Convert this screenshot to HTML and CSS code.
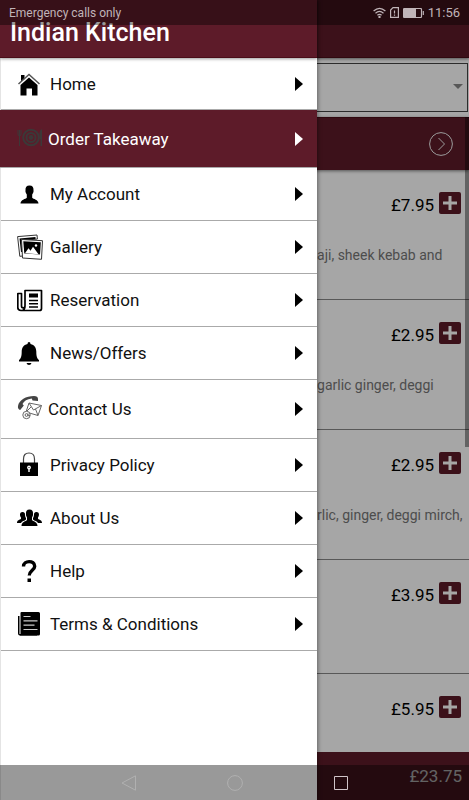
FILE: index.html
```html
<!DOCTYPE html>
<html lang="en">
<head>
<meta charset="utf-8">
<meta name="viewport" content="width=device-width, initial-scale=1">
<title>Indian Kitchen</title>
<link rel="stylesheet" href="styles.css">
</head>
<body>
<div class="app">
  <div class="page">
    <header class="page-header"></header>
    <div class="picker">
      <select class="picker-select" aria-label="Menu category"><option></option></select>
      <svg class="picker-arrow" viewBox="0 0 10 5"><path d="M0 0h10L5 5z"/></svg>
    </div>
    <main class="menu">
      <button class="category" type="button" aria-label="Open category">
        <svg class="category-icon" viewBox="0 0 24 24"><circle cx="12" cy="12" r="11.4"/><path d="M9.500 6l6 6-6 6"/></svg>
      </button>
      <section class="dish">
        <div class="dish-buy"><span class="price">£7.95</span><button class="add" type="button" aria-label="Add"><svg viewBox="0 0 22 22"><path d="M11 4v14M4 11h14"/></svg></button></div>
        <p class="dish-text">aji, sheek kebab and</p>
      </section>
      <section class="dish">
        <div class="dish-buy"><span class="price">£2.95</span><button class="add" type="button" aria-label="Add"><svg viewBox="0 0 22 22"><path d="M11 4v14M4 11h14"/></svg></button></div>
        <p class="dish-text">garlic ginger, deggi</p>
      </section>
      <section class="dish">
        <div class="dish-buy"><span class="price">£2.95</span><button class="add" type="button" aria-label="Add"><svg viewBox="0 0 22 22"><path d="M11 4v14M4 11h14"/></svg></button></div>
        <p class="dish-text">rlic, ginger, deggi mirch,</p>
      </section>
      <section class="dish dish-medium">
        <div class="dish-buy"><span class="price">£3.95</span><button class="add" type="button" aria-label="Add"><svg viewBox="0 0 22 22"><path d="M11 4v14M4 11h14"/></svg></button></div>
      </section>
      <section class="dish dish-short">
        <div class="dish-buy"><span class="price">£5.95</span><button class="add" type="button" aria-label="Add"><svg viewBox="0 0 22 22"><path d="M11 4v14M4 11h14"/></svg></button></div>
      </section>
      <div class="scroll-thumb"></div>
    </main>
    <footer class="total">£23.75</footer>
  </div>
  <div class="scrim"></div>

  <aside class="drawer">
    <h1 class="drawer-title">Indian Kitchen</h1>
    <nav class="drawer-nav">
      <a class="item item-first" href="#home">
        <svg class="icon" viewBox="0 0 26 26"><path d="M4 4h3.500v4L4 11z"/><path d="M12 6.500L20.500 14v10.500h-5.500v-7h-5.500v7H3.500V14z"/><path d="M1.500 13L12 3.500 22.500 13" fill="none" stroke="#555" stroke-width="1.500"/></svg>
        <span class="label">Home</span><svg class="arrow" viewBox="0 0 8 14"><path d="M0 0l8 7-8 7z"/></svg></a>
      <a class="item item-tall item-active" href="#order">
        <svg class="icon" viewBox="0 0 26 26"><g fill="none" stroke="currentColor"><circle cx="14" cy="11.500" r="7.800" stroke-width="2"/><circle cx="14" cy="11.500" r="4.500" stroke-width="2"/><path d="M1 4v4q0 2 1.500 2T4 8V4M2.500 4v16" stroke-width="1"/></g><circle cx="14" cy="11.500" r="2.400"/><path d="M25 3v17h-1.500v-7h-1V7q0-3 2.500-4z"/></svg>
        <span class="label">Order Takeaway</span><svg class="arrow" viewBox="0 0 8 14"><path d="M0 0l8 7-8 7z"/></svg></a>
      <a class="item" href="#account">
        <svg class="icon" viewBox="0 0 26 26"><path d="M12.500 4.500c3 0 4.200 2 4 4.500.4 2-.8 3.500-1.300 4.500v3.200c1 1.200 6.300 2 6.300 5.800h-18c0-3.800 5.300-4.600 6.300-5.800v-3.200c-.5-1-1.700-2.500-1.300-4.500-.2-2.500 1-4.500 4-4.500z"/></svg>
        <span class="label">My Account</span><svg class="arrow" viewBox="0 0 8 14"><path d="M0 0l8 7-8 7z"/></svg></a>
      <a class="item" href="#gallery">
        <svg class="icon" viewBox="0 0 26 26"><path d="M.6 2.600L20 1l.4 4L5 6.500 6 22l-3.200.3z" fill="#fff" stroke="#333"/><path d="M2.500 4.500L18.500 3v2L4.500 6.500l.8 11.500-1.300.1z"/><path d="M4.500 5.500l21 1.200-1 18.600-19-1.300z" fill="#fff" stroke="#333"/><path d="M6.300 7.300l17.500 1-.8 12.300-15.700-1z"/><path d="M8 19.300l3.500-5 2 2.500 2.500-4 5.500 7.500z" fill="#fff"/><circle cx="19" cy="11.500" r="1.200" fill="#fff"/></svg>
        <span class="label">Gallery</span><svg class="arrow" viewBox="0 0 8 14"><path d="M0 0l8 7-8 7z"/></svg></a>
      <a class="item" href="#reservation">
        <svg class="icon" viewBox="0 0 26 26"><path d="M8 3.500h16.500v18q0 2-2 2H4q-3.200 0-3.200-3V6.500H4.500V19q0 1.800 1.700 1.800T8 19zM8 19q0 4.500-3.500 4.500" fill="none" stroke="currentColor" stroke-width="1.700" stroke-linejoin="round"/><path d="M12 6.500h9v4h-9zM12 12.800h9v1.500h-9zM12 16h9v1.500h-9zM12 19.200h9v1.500h-9z"/></svg>
        <span class="label">Reservation</span><svg class="arrow" viewBox="0 0 8 14"><path d="M0 0l8 7-8 7z"/></svg></a>
      <a class="item" href="#news">
        <svg class="icon" viewBox="0 0 26 26"><path d="M10.500 4q0-2 1.500-2t1.500 2c4 .8 5.800 4 5.800 7.500 0 5 .8 7 2.700 8.500v1.500H2V20c1.900-1.500 2.700-3.500 2.700-8.500C4.700 8 6.500 4.800 10.500 4zM9.500 23h5q-.5 2-2.500 2t-2.500-2z"/></svg>
        <span class="label">News/Offers</span><svg class="arrow" viewBox="0 0 8 14"><path d="M0 0l8 7-8 7z"/></svg></a>
      <a class="item item-tall" href="#contact">
        <svg class="icon" viewBox="0 0 26 26"><path d="M1 10C2 4 9 0 17 0q4 0 4 3v2l-5.500-.5-.7-2C10 3 7 5 5.500 8l1.300 1.500-3.600 4.500Q.5 13 1 10z" fill="#444"/><g fill="#fff" stroke="#666"><path d="M12 7l12.500 2.500-3.500 10L9 16z"/><path d="M12 7l4.500 7 8-4.500M9 16l5-5M21 19.500L18.500 13" fill="none"/><circle cx="9.500" cy="19" r="3.700"/><circle cx="9.500" cy="19" r="1.400"/><path d="M11 17.500v2q1 1 2-.5" fill="none"/></g></svg>
        <span class="label">Contact Us</span><svg class="arrow" viewBox="0 0 8 14"><path d="M0 0l8 7-8 7z"/></svg></a>
      <a class="item" href="#privacy">
        <svg class="icon" viewBox="0 0 26 26"><path d="M6.500 11V7q0-6 5.500-6t5.500 6v4" fill="none" stroke="#444" stroke-width="1.200"/><path d="M3 10.500h18v13.500H3z"/><circle cx="12" cy="15.500" r="1.900" fill="#fff"/><path d="M11.300 16h1.400v4h-1.400z" fill="#fff"/><circle cx="12" cy="15.500" r=".6"/></svg>
        <span class="label">Privacy Policy</span><svg class="arrow" viewBox="0 0 8 14"><path d="M0 0l8 7-8 7z"/></svg></a>
      <a class="item" href="#about">
        <svg class="icon" viewBox="0 0 26 26"><path d="M12.500 4.500c2.800 0 3.700 1.800 3.500 4.200.3 1.800-.6 3-1 3.800v2.500c1 1.500 5.500 1.500 5.500 6h-16c0-4.500 4.500-4.500 5.500-6v-2.500c-.4-.8-1.300-2-1-3.800-.2-2.400.7-4.200 3.500-4.200z"/><path d="M5.500 7c1 0 2 .5 2.400 1.500.1 2 .4 3.500 1.100 4.500v1.500c-1.500 1.500-4 1.500-5 3.500H0c0-3 2.800-3 4-4.200v-1.300C2.500 10.500 2.500 7 5.500 7zM19.500 7c-1 0-2 .5-2.400 1.500-.1 2-.4 3.500-1.100 4.500v1.500c1.500 1.500 4 1.500 5 3.500h4c0-3-2.800-3-4-4.200v-1.300C22.500 10.500 22.500 7 19.500 7z"/></svg>
        <span class="label">About Us</span><svg class="arrow" viewBox="0 0 8 14"><path d="M0 0l8 7-8 7z"/></svg></a>
      <a class="item" href="#help">
        <svg class="icon" viewBox="0 0 26 26"><path d="M6.500 8.500C6.500 2 17.700 2 17.700 8.200c0 4-5.400 4.300-5.400 9.300" fill="none" stroke="currentColor" stroke-width="3.400"/><path d="M10.500 20.500H14V24h-3.500z"/></svg>
        <span class="label">Help</span><svg class="arrow" viewBox="0 0 8 14"><path d="M0 0l8 7-8 7z"/></svg></a>
      <a class="item" href="#terms">
        <svg class="icon" viewBox="0 0 26 26"><path d="M1 5h1.500v18H20v1.500H3q-2 0-2-2z"/><path d="M4.500 1h17q1.500 0 1.500 1.500V23q0 1.500-1.500 1.500H2.500q1-.5 1-1.500V2q0-1 1-1z"/><path d="M6.500 5.500h7M6.500 9.800h14M6.500 14.200h11M6.500 18.500h14" stroke="#ccc" stroke-width="1.200"/></svg>
        <span class="label">Terms &amp; Conditions</span><svg class="arrow" viewBox="0 0 8 14"><path d="M0 0l8 7-8 7z"/></svg></a>
    </nav>
  </aside>

  <div class="status-bar">
    <span class="carrier">Emergency calls only</span>
    <svg class="status-wifi" viewBox="0 0 13 11"><path d="M.6 4q5.900-5.400 11.800 0M2.500 6.200q4-3.600 8 0M4.400 8.300q2.100-1.900 4.200 0"/><circle cx="6.500" cy="10" r=".6"/></svg>
    <svg class="status-sim" viewBox="0 0 9 11"><path d="M3 .6h5.400v9.800H.6V3zM4.500 3.500v3M4.500 7.500v1.300"/></svg>
    <svg class="status-battery" viewBox="0 0 21 10"><rect x=".5" y=".5" width="18" height="9" rx="1"/><path class="charge" d="M1 1h12v8H1z"/><path d="M20.300 3v4"/></svg>
    <span class="clock">11:56</span>
  </div>
  <div class="nav-bar">
    <button class="nav-button" type="button" aria-label="Back"><svg viewBox="0 0 16 16"><path d="M1 8L14.500.8v14.400z"/></svg></button>
    <button class="nav-button" type="button" aria-label="Home screen"><svg viewBox="0 0 16 16"><circle cx="8" cy="8" r="7.400"/></svg></button>
    <button class="nav-button nav-recent" type="button" aria-label="Recent apps"><svg viewBox="0 0 16 16"><path d="M1.500 1.500h13v13h-13z"/></svg></button>
  </div>
</div>
</body>
</html>
```
FILE: styles.css
```css
:root {
  --brand: #5d1b29;
  --drawer-width: 67.6%;
}

* {
  box-sizing: border-box;
}

body {
  margin: 0;
  font-family: Roboto, "Liberation Sans", sans-serif;
  color: #000;
}

button {
  padding: 0;
  border: 0;
  background: none;
  font: inherit;
}

svg {
  display: block;
}

.app {
  position: relative;
  overflow: hidden;
}

.page {
  display: flex;
  flex-direction: column;
  min-height: 100vh;
  background: #fff;
}

.page-header {
  height: 58px;
  background: var(--brand);
  border-bottom: 1px solid #4a0d18;
  box-shadow: 0 1px 3px rgba(0, 0, 0, 0.5);
}

.picker {
  position: relative;
  padding: 5px 1px;
}

.picker-select {
  display: block;
  width: 100%;
  height: 49px;
  border: 1px solid #444;
  border-radius: 0;
  background: #fff;
  appearance: none;
}

.picker-arrow {
  position: absolute;
  top: 26px;
  right: 6px;
  width: 10px;
  height: 5px;
  fill: #888;
}

.menu {
  position: relative;
  flex: 1;
}

.category {
  display: flex;
  align-items: center;
  justify-content: flex-end;
  width: 100%;
  height: 53px;
  padding: 0 16px;
  background: var(--brand);
  border-top: 1px solid #4a0d18;
  box-shadow: 0 1px 3px rgba(0, 0, 0, 0.5);
}

.category-icon {
  width: 24px;
  height: 24px;
  fill: none;
  stroke: #eee;
}

.dish {
  min-height: 130px;
  padding-top: 22px;
  border-bottom: 1px solid #888;
}

.dish-medium {
  min-height: 114px;
}

.dish-short {
  min-height: 78px;
  border-bottom: 0;
}

.dish-buy {
  display: flex;
  justify-content: flex-end;
  gap: 5px;
  padding: 0 8px;
  line-height: 26px;
}

.price {
  font-size: 17px;
}

.add {
  width: 22px;
  height: 22px;
  border-radius: 2px;
  background: var(--brand);
}

.add svg {
  stroke: #fff;
  stroke-width: 3;
}

.dish-text {
  margin: 26px 0 0;
  padding-left: var(--drawer-width);
  font-size: 14px;
  line-height: 22px;
  white-space: nowrap;
  color: #777;
}

.scroll-thumb {
  position: absolute;
  top: 0;
  right: 0;
  width: 4px;
  height: 330px;
  background: rgba(0, 0, 0, 0.4);
}

.total {
  height: 48px;
  padding: 0 7px;
  background: var(--brand);
  color: #fff;
  font-size: 17px;
  line-height: 48px;
  text-align: right;
}

.scrim {
  position: absolute;
  inset: 0;
  background: rgba(0, 0, 0, 0.35);
}

.drawer {
  position: absolute;
  top: 0;
  bottom: 0;
  left: 0;
  width: var(--drawer-width);
  background: #fff;
  border-left: 1px solid #e4e4e4;
  box-shadow: 1px 0 4px rgba(0, 0, 0, 0.4);
}

.drawer-title {
  height: 58px;
  margin: 0 0 0 -1px;
  padding: 21px 10px 0;
  background: var(--brand);
  border-bottom: 1px solid #4a0d18;
  box-shadow: 0 1px 3px rgba(0, 0, 0, 0.4);
  color: #fff;
  font-size: 25px;
  font-weight: 500;
  line-height: 24px;
}

.item {
  display: flex;
  align-items: center;
  gap: 7px;
  height: 53px;
  padding: 0 14px 0 16px;
  border-bottom: 1px solid #aaa;
  color: #111;
  font-size: 17px;
  text-decoration: none;
}

.item-first {
  height: 52px;
}

.item-tall {
  gap: 5px;
  height: 59px;
}

.item-active {
  height: 58px;
  margin-left: -1px;
  padding-left: 17px;
  background: var(--brand);
  color: #fff;
}

.icon {
  width: 26px;
  height: 26px;
  fill: currentColor;
  color: #000;
}

.item-active .icon {
  color: #3c3838;
}

.label {
  flex: 1;
}

.arrow {
  width: 8px;
  height: 14px;
  fill: #000;
}

.item-active .arrow {
  fill: #fff;
}

.status-bar {
  position: absolute;
  top: 0;
  left: 0;
  right: 0;
  display: flex;
  align-items: center;
  gap: 4px;
  height: 25px;
  padding: 0 9px;
  background: rgba(0, 0, 0, 0.4);
  color: #c0b4b8;
  font-size: 12px;
  line-height: 14px;
}

.carrier {
  flex: 1;
}

.status-bar svg {
  fill: none;
  stroke: #c0b4b8;
  stroke-width: 1.2;
}

.status-wifi {
  width: 13px;
  height: 11px;
}

.status-sim {
  width: 9px;
  height: 11px;
}

.status-battery {
  width: 21px;
  height: 10px;
}

.status-battery .charge {
  fill: #c0b4b8;
  stroke: none;
}

.clock {
  font-size: 13px;
}

.nav-bar {
  position: absolute;
  bottom: 0;
  left: 0;
  right: 0;
  display: flex;
  align-items: center;
  justify-content: center;
  gap: 90px;
  height: 35px;
  background: rgba(0, 0, 0, 0.4);
}

.nav-button {
  width: 16px;
  height: 16px;
}

.nav-button svg {
  fill: none;
  stroke: #b0b0b0;
}

.nav-recent svg {
  stroke: #d0c4c8;
}
```
